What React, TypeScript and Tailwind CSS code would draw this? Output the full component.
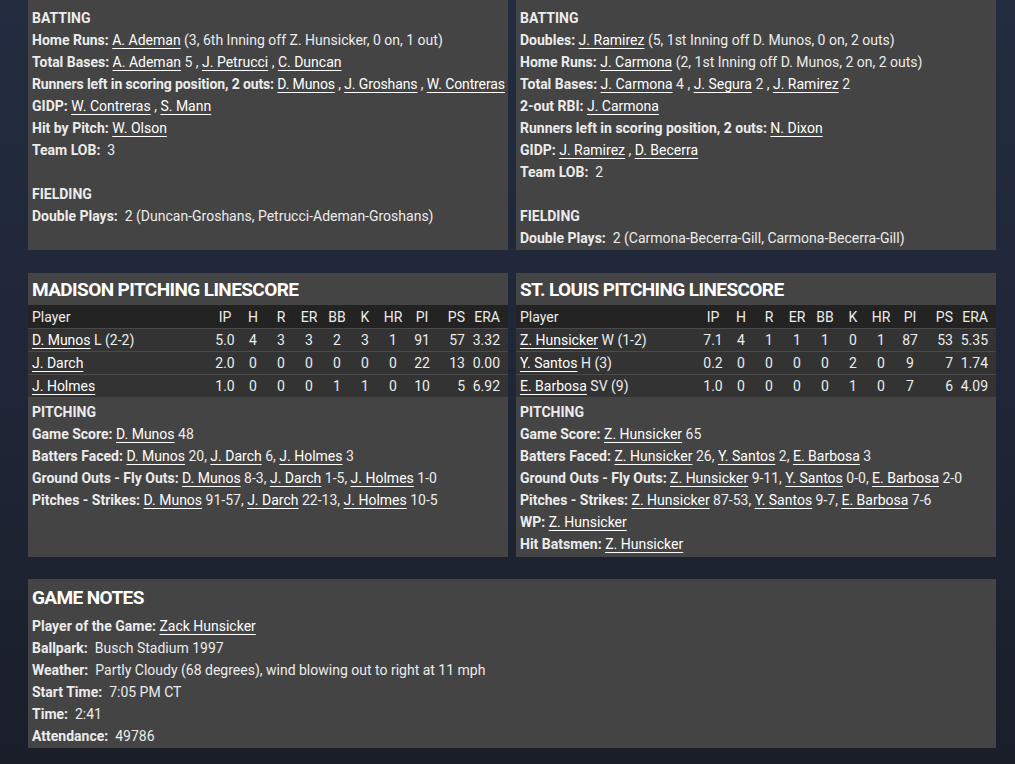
import React from 'react'

type Part = string | { l: string }

const L = (l: string) => ({ l })

function Line({ label, parts, gap, tight }: { label: string; parts?: Part[]; gap?: boolean; tight?: boolean }) {
  return (
    <div className={'whitespace-nowrap' + (tight ? ' tracking-[-0.12px]' : '')}>
      <span className="font-bold">{label}</span>
      {gap ? '\u00a0 ' : ' '}
      {parts?.map((p, i) =>
        typeof p === 'string' ? (
          <span key={i}>{p}</span>
        ) : (
          <a key={i} href="#" className="underline underline-offset-[3px] decoration-1 text-white">
            {p.l}
          </a>
        )
      )}
    </div>
  )
}

const cols = ['IP', 'H', 'R', 'ER', 'BB', 'K', 'HR', 'PI', 'PS', 'ERA']

type Pitcher = { name: string; note: string; stats: string[] }

const madison: Pitcher[] = [
  { name: 'D. Munos', note: 'L (2-2)', stats: ['5.0', '4', '3', '3', '2', '3', '1', '91', '57', '3.32'] },
  { name: 'J. Darch', note: '', stats: ['2.0', '0', '0', '0', '0', '0', '0', '22', '13', '0.00'] },
  { name: 'J. Holmes', note: '', stats: ['1.0', '0', '0', '0', '1', '1', '0', '10', '5', '6.92'] },
]

const stlouis: Pitcher[] = [
  { name: 'Z. Hunsicker', note: 'W (1-2)', stats: ['7.1', '4', '1', '1', '1', '0', '1', '87', '53', '5.35'] },
  { name: 'Y. Santos', note: 'H (3)', stats: ['0.2', '0', '0', '0', '0', '2', '0', '9', '7', '1.74'] },
  { name: 'E. Barbosa', note: 'SV (9)', stats: ['1.0', '0', '0', '0', '0', '1', '0', '7', '6', '4.09'] },
]

const grid = 'grid grid-cols-[1fr_28px_28px_28px_28px_28px_28px_28px_30px_32px_39px] h-[23px] items-center'

function cellClass(i: number) {
  if (i === 8) return 'text-right pr-1'
  if (i === 9) return 'text-right pr-2'
  return 'text-center'
}

function PitchTable({ rows }: { rows: Pitcher[] }) {
  return (
    <div>
      <div className={grid + ' bg-[#232323]'}>
        <div className="pl-1">Player</div>
        {cols.map((c, i) => (
          <div key={c} className={cellClass(i)}>{c}</div>
        ))}
      </div>
      {rows.map((r) => (
        <div key={r.name} className={grid + ' bg-[#333333] border-t border-[#4a4a4a] box-border'}>
          <div className="pl-1 whitespace-nowrap">
            <a href="#" className="underline underline-offset-[3px] decoration-1 text-white">{r.name}</a>
            {r.note && ' ' + r.note}
          </div>
          {r.stats.map((s, i) => (
            <div key={i} className={cellClass(i)}>{s}</div>
          ))}
        </div>
      ))}
    </div>
  )
}

function Heading({ children, tall }: { children: React.ReactNode; tall?: boolean }) {
  return (
    <div
      className={
        (tall ? 'h-[36px] pt-[1px]' : 'h-[32px] pt-[2px]') +
        ' flex items-center px-1 text-[19px] font-bold text-white tracking-[-0.6px] whitespace-nowrap'
      }
    >
      {children}
    </div>
  )
}

export default function App() {
  return (
    <div
      className="min-h-screen bg-gradient-to-b from-[#232c40] via-[#1f2637] to-[#1a1e29] text-[#ececec] text-[14px] leading-[22px]"
      style={{ fontFamily: 'Roboto, "Noto Sans", sans-serif' }}
    >
      <div className="ml-[28px] w-[968px] flex flex-col pb-[16px]">
        {/* batting / fielding */}
        <div className="grid grid-cols-2 gap-2">
          <div className="bg-[#444444] px-1 pt-[7px] pb-[1px]">
            <div className="font-bold">BATTING</div>
            <Line label="Home Runs:" parts={[L('A. Ademan'), ' (3, 6th Inning off Z. Hunsicker, 0 on, 1 out)']} />
            <Line label="Total Bases:" parts={[L('A. Ademan'), ' 5 , ', L('J. Petrucci'), ' , ', L('C. Duncan')]} />
            <Line
              tight
              label="Runners left in scoring position, 2 outs:"
              parts={[L('D. Munos'), ' , ', L('J. Groshans'), ' , ', L('W. Contreras')]}
            />
            <Line label="GIDP:" parts={[L('W. Contreras'), ' , ', L('S. Mann')]} />
            <Line label="Hit by Pitch:" parts={[L('W. Olson')]} />
            <Line label="Team LOB:" gap parts={['3']} />
            <div>&nbsp;</div>
            <div className="font-bold">FIELDING</div>
            <Line label="Double Plays:" gap parts={['2 (Duncan-Groshans, Petrucci-Ademan-Groshans)']} />
          </div>
          <div className="bg-[#444444] px-1 pt-[7px] pb-[1px]">
            <div className="font-bold">BATTING</div>
            <Line label="Doubles:" parts={[L('J. Ramirez'), ' (5, 1st Inning off D. Munos, 0 on, 2 outs)']} />
            <Line label="Home Runs:" parts={[L('J. Carmona'), ' (2, 1st Inning off D. Munos, 2 on, 2 outs)']} />
            <Line
              label="Total Bases:"
              parts={[L('J. Carmona'), ' 4 , ', L('J. Segura'), ' 2 , ', L('J. Ramirez'), ' 2']}
            />
            <Line label="2-out RBI:" parts={[L('J. Carmona')]} />
            <Line label="Runners left in scoring position, 2 outs:" parts={[L('N. Dixon')]} />
            <Line label="GIDP:" parts={[L('J. Ramirez'), ' , ', L('D. Becerra')]} />
            <Line label="Team LOB:" gap parts={['2']} />
            <div>&nbsp;</div>
            <div className="font-bold">FIELDING</div>
            <Line label="Double Plays:" gap parts={['2 (Carmona-Becerra-Gill, Carmona-Becerra-Gill)']} />
          </div>
        </div>

        {/* pitching */}
        <div className="grid grid-cols-2 gap-2 mt-[23px]">
          <div className="bg-[#444444] pb-[2px]">
            <Heading>MADISON PITCHING LINESCORE</Heading>
            <PitchTable rows={madison} />
            <div className="px-1 pt-[4px]">
              <div className="font-bold">PITCHING</div>
              <Line label="Game Score:" parts={[L('D. Munos'), ' 48']} />
              <Line
                label="Batters Faced:"
                parts={[L('D. Munos'), ' 20, ', L('J. Darch'), ' 6, ', L('J. Holmes'), ' 3']}
              />
              <Line
                label="Ground Outs - Fly Outs:"
                parts={[L('D. Munos'), ' 8-3, ', L('J. Darch'), ' 1-5, ', L('J. Holmes'), ' 1-0']}
              />
              <Line
                label="Pitches - Strikes:"
                parts={[L('D. Munos'), ' 91-57, ', L('J. Darch'), ' 22-13, ', L('J. Holmes'), ' 10-5']}
              />
            </div>
          </div>
          <div className="bg-[#444444] pb-[2px]">
            <Heading>ST. LOUIS PITCHING LINESCORE</Heading>
            <PitchTable rows={stlouis} />
            <div className="px-1 pt-[4px]">
              <div className="font-bold">PITCHING</div>
              <Line label="Game Score:" parts={[L('Z. Hunsicker'), ' 65']} />
              <Line
                label="Batters Faced:"
                parts={[L('Z. Hunsicker'), ' 26, ', L('Y. Santos'), ' 2, ', L('E. Barbosa'), ' 3']}
              />
              <Line
                label="Ground Outs - Fly Outs:"
                parts={[L('Z. Hunsicker'), ' 9-11, ', L('Y. Santos'), ' 0-0, ', L('E. Barbosa'), ' 2-0']}
              />
              <Line
                label="Pitches - Strikes:"
                parts={[L('Z. Hunsicker'), ' 87-53, ', L('Y. Santos'), ' 9-7, ', L('E. Barbosa'), ' 7-6']}
              />
              <Line label="WP:" parts={[L('Z. Hunsicker')]} />
              <Line label="Hit Batsmen:" parts={[L('Z. Hunsicker')]} />
            </div>
          </div>
        </div>

        {/* game notes */}
        <div className="bg-[#444444] mt-[22px] pb-[1px]">
          <Heading tall>GAME NOTES</Heading>
          <div className="px-1">
            <Line label="Player of the Game:" parts={[L('Zack Hunsicker')]} />
            <Line label="Ballpark:" gap parts={['Busch Stadium 1997']} />
            <Line label="Weather:" gap parts={['Partly Cloudy (68 degrees), wind blowing out to right at 11 mph']} />
            <Line label="Start Time:" gap parts={['7:05 PM CT']} />
            <Line label="Time:" gap parts={['2:41']} />
            <Line label="Attendance:" gap parts={['49786']} />
          </div>
        </div>
      </div>
    </div>
  )
}
